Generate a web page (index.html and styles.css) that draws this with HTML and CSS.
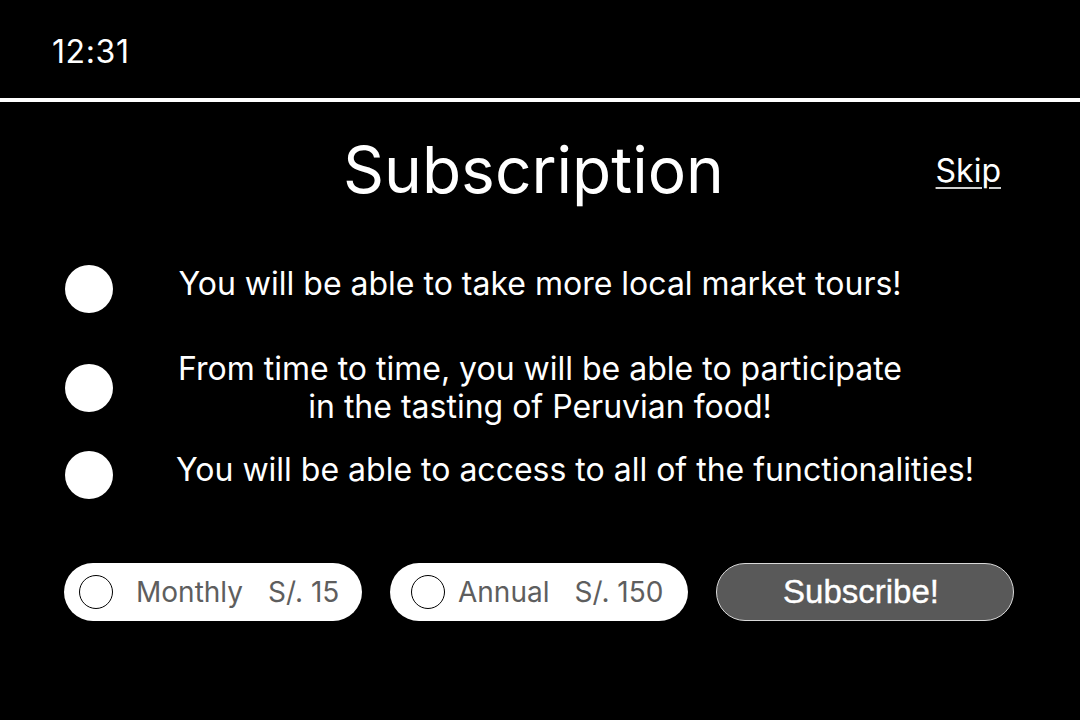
FILE: index.html
```html
<!DOCTYPE html>
<html lang="en">
<head>
<meta charset="utf-8">
<title>Subscription</title>
<link rel="stylesheet" href="styles.css">
</head>
<body>
<div class="screen">
  <div class="status"><span class="time">12:31</span></div>
  <div class="divider"></div>
  <header class="header">
    <h1 class="title">Subscription</h1>
    <a class="skip" href="#">Skip</a>
  </header>
  <ul class="benefits">
    <li class="benefit benefit-1">
      <span class="dot"></span>
      <p class="benefit-text">You will be able to take more local market tours!</p>
    </li>
    <li class="benefit benefit-2">
      <span class="dot"></span>
      <p class="benefit-text">From time to time, you will be able to participate<br>in the tasting of Peruvian food!</p>
    </li>
    <li class="benefit benefit-3">
      <span class="dot"></span>
      <p class="benefit-text">You will be able to access to all of the functionalities!</p>
    </li>
  </ul>
  <div class="actions">
    <label class="plan plan-monthly">
      <span class="radio"></span>
      <span class="plan-name">Monthly</span>
      <span class="plan-price">S/. 15</span>
    </label>
    <label class="plan plan-annual">
      <span class="radio"></span>
      <span class="plan-name">Annual</span>
      <span class="plan-price">S/. 150</span>
    </label>
    <button class="subscribe">Subscribe!</button>
  </div>
</div>
</body>
</html>
```

FILE: styles.css
```css
* { box-sizing: border-box; }
html, body {
  margin: 0;
  padding: 0;
  background: #000;
}
body {
  font-family: Inter, "Noto Sans", sans-serif;
  color: #fff;
}
.screen {
  width: 1080px;
  height: 720px;
  overflow: hidden;
  background: #000;
}
.status {
  height: 98px;
  padding: 36px 0 0 52px;
}
.time {
  font-size: 32px;
  line-height: 32px;
  letter-spacing: 0.6px;
  display: block;
}
.divider {
  height: 4px;
  background: #fff;
}
.header {
  display: flex;
  align-items: flex-start;
  padding: 0 79px 0 343px;
  margin-top: 36px;
}
.title {
  margin: 0;
  font-size: 64px;
  font-weight: 400;
  line-height: 64px;
}
.skip {
  margin-left: auto;
  margin-top: 13px;
  color: #fff;
  font-size: 32px;
  text-decoration: underline;
  text-decoration-color: #d0d0d0;
  text-underline-offset: 5px;
  text-decoration-thickness: 2px;
}
.benefits {
  list-style: none;
  margin: 63px 0 0;
  padding: 0;
}
.benefit {
  display: flex;
  align-items: flex-start;
  padding-left: 65px;
}
.benefit-2 { margin-top: 37px; }
.benefit-3 { margin-top: 25px; }
.benefit-2 .dot { align-self: center; }
.dot {
  flex: none;
  width: 48px;
  height: 48px;
  border-radius: 50%;
  background: #fff;
}
.benefit-text {
  margin: 0 0 0 63px;
  width: 728px;
  flex: none;
  text-align: center;
  white-space: nowrap;
  font-size: 32px;
  font-weight: 400;
  line-height: 38px;
}
.actions {
  display: flex;
  gap: 28px;
  padding-left: 64px;
  margin-top: 64px;
}
.plan {
  width: 298px;
  height: 58px;
  border-radius: 29px;
  background: #fff;
  display: flex;
  align-items: center;
  color: #5e5e5e;
  font-size: 28px;
}
.plan-monthly { padding-left: 15px; }
.plan-annual { padding-left: 21px; }
.radio {
  width: 34px;
  height: 34px;
  border: 1.3px solid #000;
  border-radius: 50%;
  flex: none;
}
.plan-monthly .plan-name { margin-left: 23px; }
.plan-annual .plan-name { margin-left: 13px; }
.plan-price { margin-left: 25px; }
.subscribe {
  width: 298px;
  height: 58px;
  border-radius: 29px;
  background: #595959;
  border: 1px solid #d9d9d9;
  color: #fff;
  font-family: "Liberation Sans", Arial, sans-serif;
  font-size: 33px;
  -webkit-text-stroke: 0.4px #fff;
  padding: 0 8px 0 0;
}
```
